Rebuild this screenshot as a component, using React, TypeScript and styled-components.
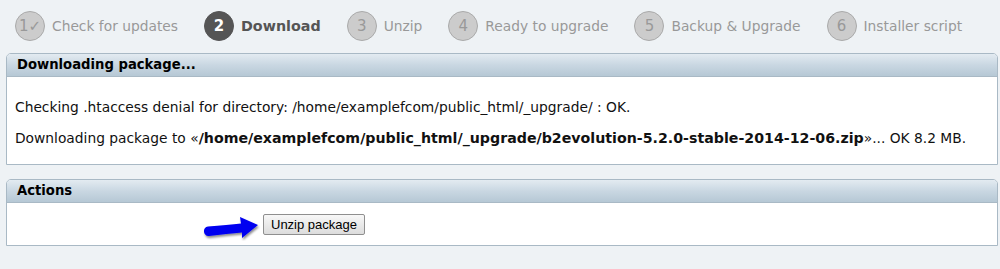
import styled, { createGlobalStyle } from "styled-components";

/* ===============================
   Global
================================ */

const GlobalStyle = createGlobalStyle`
  html, body {
    margin: 0;
    padding: 0;
    background: #eef2f5;
  }

  body {
    font-family: "DejaVu Sans", Verdana, sans-serif;
    color: #111;
  }
`;

const Page = styled.div`
  width: 1000px;
  height: 269px;
  padding: 0 2px 0 6px;
  box-sizing: border-box;
`;

/* ===============================
   Steps
================================ */

const Steps = styled.ol`
  list-style: none;
  margin: 0;
  padding: 0 0 1px 9px;
  height: 53px;
  box-sizing: border-box;

  display: flex;
  align-items: center;
  gap: 26px;
`;

const Step = styled.li<{ $current?: boolean }>`
  display: flex;
  align-items: center;
  gap: 7px;

  font-size: ${(p) => (p.$current ? "14.3px" : "13.8px")};
  font-weight: ${(p) => (p.$current ? 700 : 400)};
  color: ${(p) => (p.$current ? "#555" : "#999")};
`;

const Bubble = styled.span<{ $current?: boolean }>`
  width: 30px;
  height: 30px;
  border-radius: 50%;
  box-sizing: border-box;

  display: flex;
  align-items: center;
  justify-content: center;

  font-size: 15px;
  font-weight: ${(p) => (p.$current ? 700 : 400)};
  color: ${(p) => (p.$current ? "#fff" : "#999")};
  background: ${(p) => (p.$current ? "#555" : "#ccc")};
  border: 1px solid ${(p) => (p.$current ? "#555" : "#aaa")};
`;

/* ===============================
   Panel
================================ */

const Panel = styled.section`
  border: 1px solid #a9b9c5;
  border-radius: 5px 5px 0 0;
  background: #fff;
  margin-bottom: 14px;
`;

const PanelHead = styled.h2`
  margin: 0;
  height: 23px;
  padding: 0 10px;
  box-sizing: border-box;

  font-size: 13.2px;
  font-weight: 700;
  line-height: 22px;
  color: #000;

  border-radius: 4px 4px 0 0;
  border-bottom: 1px solid #a9b9c5;
  background: linear-gradient(to bottom, #e3ebf1 0%, #c9d7e2 50%, #b6c8d5 100%);
`;

const PanelBody = styled.div`
  padding: 12px 8px 3px;
  font-size: 13.8px;

  p {
    margin: 10px 0 14px;
    line-height: 17px;
  }

  b {
    font-size: 14.2px;
  }
`;

/* ===============================
   Actions
================================ */

const ActionRow = styled.div`
  height: 42px;
  padding-left: 194px;

  display: flex;
  align-items: center;
  gap: 2px;
`;

const ArrowBox = styled.span`
  display: flex;
  margin-top: 7px;
`;

const Button = styled.button`
  height: 21px;
  padding: 0 7px;

  font-family: "Liberation Sans", Arial, sans-serif;
  font-size: 13px;
  color: #000;

  border: 1px solid #8f8f8f;
  border-radius: 2px;
  background: linear-gradient(to bottom, #f8f8f8, #dcdcdc);
`;

function Arrow() {
  return (
    <ArrowBox>
      <svg width="60" height="26" viewBox="0 0 60 26">
        <defs>
          <filter id="sh" x="-20%" y="-40%" width="140%" height="180%">
            <feDropShadow dx="1" dy="2" stdDeviation="1.3" floodColor="#000" floodOpacity="0.45" />
          </filter>
        </defs>
        <path
          d="M7 11.5 C20 10.5 31 9.5 40 8.5 L39 2 L57 10 L41 23 L41 17.5 C31 18.5 20 19.5 8 21 C2 21.5 1 12 7 11.5 Z"
          fill="#0000f0"
          filter="url(#sh)"
        />
      </svg>
    </ArrowBox>
  );
}

/* ===============================
   App
================================ */

const steps = [
  "Check for updates",
  "Download",
  "Unzip",
  "Ready to upgrade",
  "Backup & Upgrade",
  "Installer script",
];

export default function App() {
  return (
    <>
      <GlobalStyle />
      <Page>
        <Steps>
          {steps.map((label, i) => {
            const current = i === 1;
            return (
              <Step key={label} $current={current}>
                <Bubble $current={current}>
                  {i === 0 ? "1\u2713" : i + 1}
                </Bubble>
                {label}
              </Step>
            );
          })}
        </Steps>

        <Panel>
          <PanelHead>Downloading package...</PanelHead>
          <PanelBody>
            <p>
              Checking .htaccess denial for directory:
              /home/examplefcom/public_html/_upgrade/ : OK.
            </p>
            <p>
              Downloading package to «
              <b>/home/examplefcom/public_html/_upgrade/b2evolution-5.2.0-stable-2014-12-06.zip</b>
              »... OK 8.2 MB.
            </p>
          </PanelBody>
        </Panel>

        <Panel>
          <PanelHead>Actions</PanelHead>
          <ActionRow>
            <Arrow />
            <Button>Unzip package</Button>
          </ActionRow>
        </Panel>
      </Page>
    </>
  );
}
